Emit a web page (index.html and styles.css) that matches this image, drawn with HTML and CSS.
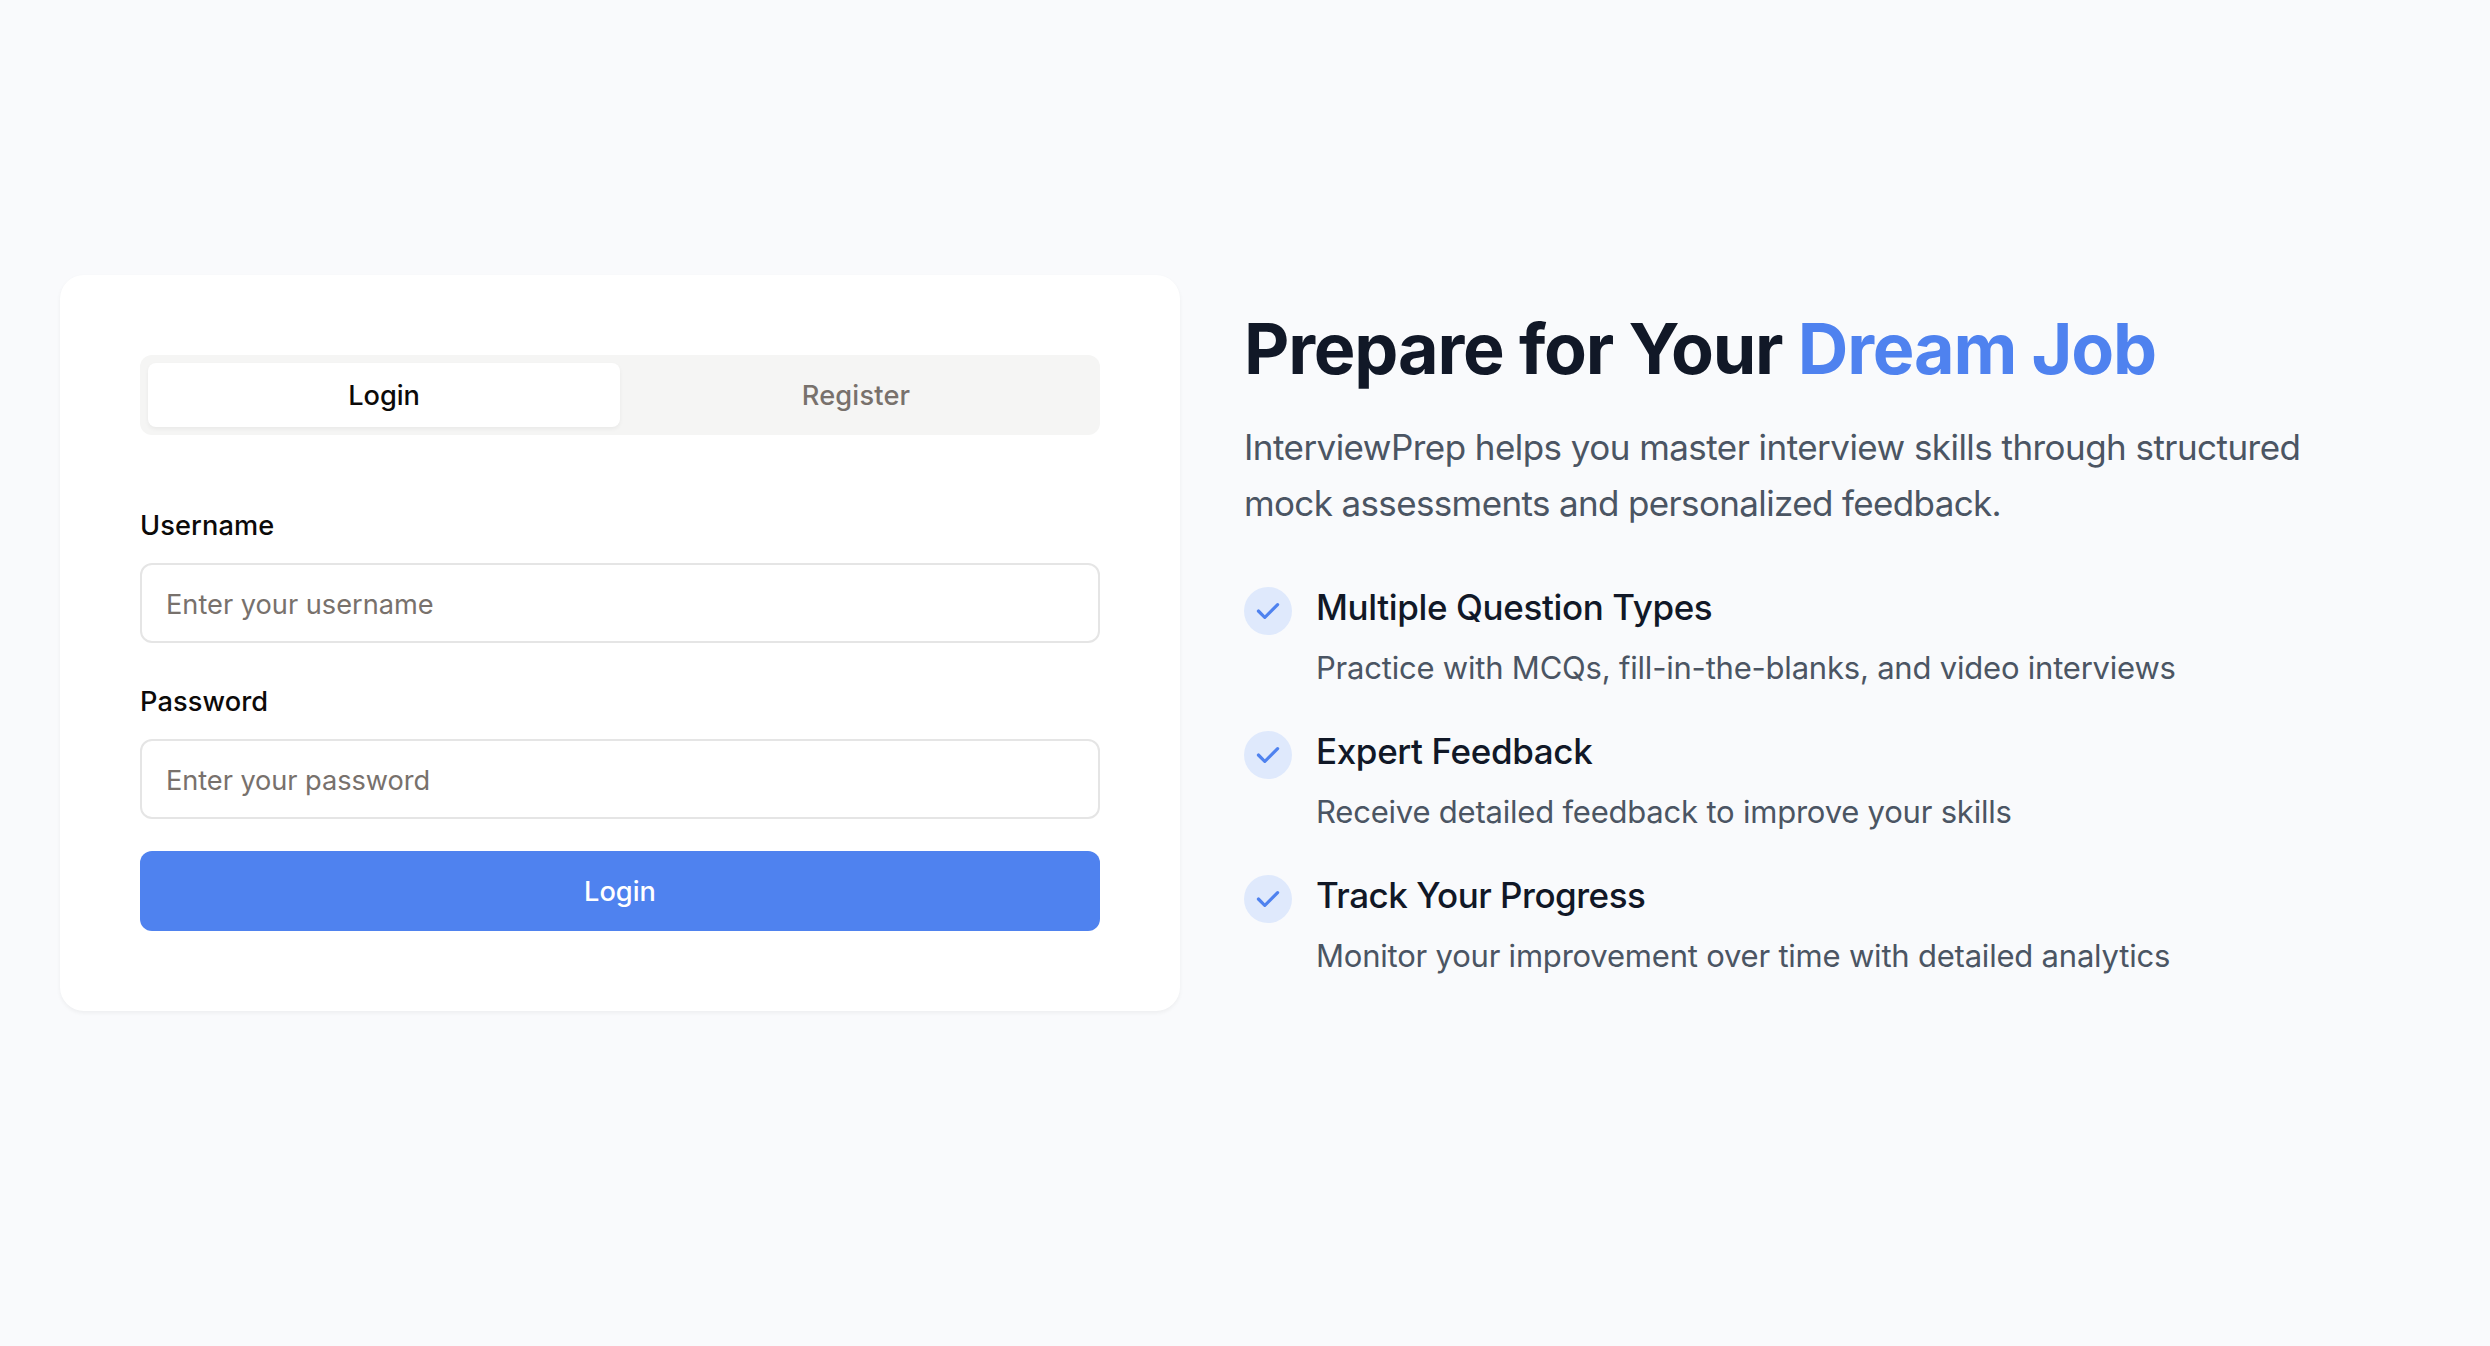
FILE: index.html
```html
<!DOCTYPE html>
<html lang="en">
<head>
<meta charset="utf-8">
<title>InterviewPrep</title>
<link rel="stylesheet" href="styles.css">
</head>
<body>
<main class="page">
  <section class="card">
    <div class="tabs">
      <button class="tab tab-active"><span class="t-login">Login</span></button>
      <button class="tab"><span class="t-register">Register</span></button>
    </div>
    <form class="form">
      <label class="label" for="username">Username</label>
      <input class="field" id="username" type="text" placeholder="Enter your username">
      <label class="label" for="password">Password</label>
      <input class="field field-password" id="password" type="password" placeholder="Enter your password">
      <button class="submit" type="button">Login</button>
    </form>
  </section>
  <section class="intro">
    <h1 class="title">Prepare for Your <span class="accent">Dream Job</span></h1>
    <p class="lead"><span class="lead-first">InterviewPrep helps you master interview skills through structured</span><br><span class="lead-second">mock assessments and personalized feedback.</span></p>
    <ul class="features">
      <li class="feature">
        <span class="badge"><svg class="check" viewBox="0 0 20 20"><path d="M16.707 5.293a1 1 0 010 1.414l-8 8a1 1 0 01-1.414 0l-4-4a1 1 0 011.414-1.414L8 12.586l7.293-7.293a1 1 0 011.414 0z"/></svg></span>
        <div><h3 class="name">Multiple Question Types</h3><p class="desc">Practice with MCQs, fill-in-the-blanks, and video interviews</p></div>
      </li>
      <li class="feature">
        <span class="badge"><svg class="check" viewBox="0 0 20 20"><path d="M16.707 5.293a1 1 0 010 1.414l-8 8a1 1 0 01-1.414 0l-4-4a1 1 0 011.414-1.414L8 12.586l7.293-7.293a1 1 0 011.414 0z"/></svg></span>
        <div><h3 class="name">Expert Feedback</h3><p class="desc">Receive detailed feedback to improve your skills</p></div>
      </li>
      <li class="feature">
        <span class="badge"><svg class="check" viewBox="0 0 20 20"><path d="M16.707 5.293a1 1 0 010 1.414l-8 8a1 1 0 01-1.414 0l-4-4a1 1 0 011.414-1.414L8 12.586l7.293-7.293a1 1 0 011.414 0z"/></svg></span>
        <div><h3 class="name name-track">Track Your Progress</h3><p class="desc">Monitor your improvement over time with detailed analytics</p></div>
      </li>
    </ul>
  </section>
</main>
</body>
</html>
```

FILE: styles.css
```css
* { box-sizing: border-box; margin: 0; padding: 0; }
body { background: #f9fafc; font-family: Inter, "Liberation Sans", sans-serif; color: #0c0a09; }
button, input { font-family: inherit; }
.page { display: grid; grid-template-columns: 1120px 1120px; gap: 64px; padding: 275px 60px 0; height: 1346px; align-items: start; white-space: nowrap; }
.card { height: 736px; padding: 80px; background: #fff; border-radius: 24px; box-shadow: 0 2px 4px rgba(0,0,0,.05); }
.tabs { display: grid; grid-template-columns: 1fr 1fr; height: 80px; padding: 8px; background: #f5f5f4; border-radius: 12px; }
.tab { border: 0; padding-top: 2px; background: none; border-radius: 8px; font-size: 27.2px; font-weight: 500; line-height: 40px; color: #78716c; }
.tab-active { background: #fff; color: #0c0a09; box-shadow: 0 2px 4px rgba(0,0,0,.05); }
.t-login { letter-spacing: -.05px; }
.t-register { letter-spacing: .2px; }
.form { display: flex; flex-direction: column; padding-top: 77px; }
.label { font-size: 27.2px; font-weight: 500; line-height: 28px; margin-bottom: 23px; letter-spacing: .1px; }
.field { height: 80px; border: 2px solid #e5e5e5; border-radius: 12px; padding: 2px 24px 0; margin-bottom: 45px; background: #fff; font-size: 27.2px; color: #0c0a09; outline: 0; }
.field::placeholder { color: #78716c; opacity: 1; }
.field-password { margin-bottom: 32px; letter-spacing: -.06px; }
.submit { height: 80px; padding-top: 2px; border: 0; border-radius: 12px; background: #4f82ef; color: #fff; font-size: 27.2px; font-weight: 500; line-height: 40px; }
.intro { padding-top: 34px; }
.title { font-size: 70px; line-height: 80px; font-weight: 700; letter-spacing: -1.18px; color: #111827; }
.accent { color: #4f82ef; }
.lead { margin-top: 30px; font-size: 35px; line-height: 56px; color: #4b5563; }
.lead-first { letter-spacing: -.55px; }
.lead-second { letter-spacing: -.64px; }
.features { list-style: none; margin-top: 48px; display: grid; gap: 32px; }
.feature { display: flex; gap: 24px; height: 112px; }
.badge { width: 48px; height: 48px; margin-top: 8px; border-radius: 50%; background: #dfe9fc; display: grid; place-items: center; flex: none; }
.check { width: 32px; height: 32px; fill: #4f82ef; }
.name { font-size: 35px; line-height: 56px; font-weight: 500; letter-spacing: -.37px; color: #111827; }
.name-track { letter-spacing: -.5px; }
.desc { font-size: 31px; line-height: 48px; margin-top: 9px; letter-spacing: -.21px; color: #4b5563; }
```
